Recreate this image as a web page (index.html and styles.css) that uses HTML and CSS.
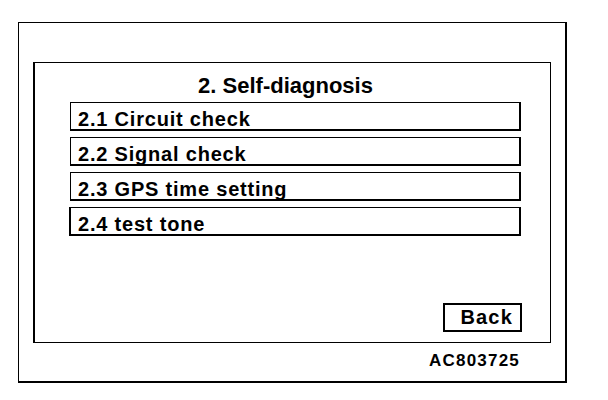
FILE: index.html
```html
<!DOCTYPE html>
<html>
<head>
<meta charset="utf-8">
<link rel="stylesheet" href="styles.css">
</head>
<body>
<div class="frame">
  <div class="panel">
    <div class="title">2. Self-diagnosis</div>
    <div class="menu">
      <div class="item">2.1 Circuit check</div>
      <div class="item">2.2 Signal check</div>
      <div class="item">2.3 GPS time setting</div>
      <div class="item item-last">2.4 test tone</div>
    </div>
    <div class="actions">
      <div class="back">Back</div>
    </div>
  </div>
  <div class="code">AC803725</div>
</div>
</body>
</html>
```
FILE: styles.css
```css
html, body {
  margin: 0;
  padding: 0;
  background: #fff;
}
body {
  font-family: "Liberation Sans", Arial, sans-serif;
  font-weight: bold;
  color: #000;
  width: 608px;
  height: 400px;
  overflow: hidden;
}
.frame {
  box-sizing: border-box;
  margin: 22px 0 0 18px;
  width: 549px;
  height: 361px;
  border-style: solid;
  border-color: #000;
  border-width: 1px 2px 2px 1px;
  padding: 39px 0 0 14px;
  display: flex;
  flex-direction: column;
}
.panel {
  box-sizing: border-box;
  width: 518px;
  height: 281px;
  border-style: solid;
  border-color: #000;
  border-width: 1px 1px 1px 2px;
  padding: 0 29px 0 35px;
  display: flex;
  flex-direction: column;
}
.title {
  font-size: 22px;
  line-height: 26px;
  height: 39px;
  padding-top: 10px;
  box-sizing: border-box;
  text-align: center;
  padding-right: 20px;
}
.menu {
  display: flex;
  flex-direction: column;
  gap: 6px;
}
.item {
  box-sizing: border-box;
  height: 29px;
  border-style: solid;
  border-color: #000;
  border-width: 1px 2px 2px 1px;
  padding: 4px 0 0 7px;
  font-size: 20px;
  letter-spacing: 0.8px;
  line-height: 24px;
  overflow: hidden;
}
.item-last {
  border-width: 1px 2px 2px 2px;
  margin-left: -1px;
}
.actions {
  margin-top: auto;
  display: flex;
  justify-content: flex-end;
  padding-bottom: 10px;
  margin-right: -1px;
}
.back {
  box-sizing: border-box;
  width: 79px;
  height: 29px;
  border: 2px solid #000;
  font-size: 20px;
  letter-spacing: 1.2px;
  line-height: 25px;
  text-align: right;
  padding-right: 7px;
}
.code {
  width: 518px;
  text-align: right;
  box-sizing: border-box;
  padding-right: 31px;
  margin-top: 8px;
  font-size: 17px;
  letter-spacing: 1.2px;
  line-height: 20px;
}
```
